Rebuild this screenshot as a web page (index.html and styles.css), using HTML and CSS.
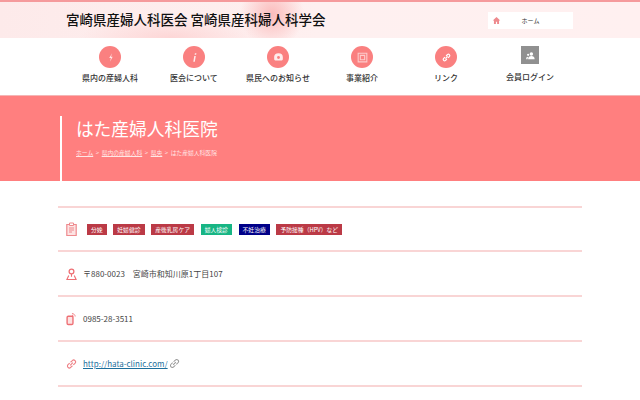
FILE: index.html
```html
<!DOCTYPE html>
<html lang="ja">
  <head>
    <meta charset="UTF-8" />
    <title>はた産婦人科医院</title>
    <link rel="stylesheet" href="styles.css">
  </head>
  <body>
    <header class="top">
      <div class="top-inner">
        <div class="site-name">宮崎県産婦人科医会 宮崎県産科婦人科学会</div>
        <a class="home-box" href="#">
          <svg class="home-icon" viewBox="0 0 12 12"><path d="M6 1.2 1 6h1.6v4.6h2.6V7.6h1.6v3h2.6V6H11z" fill="#ee8a8e"/></svg>
          <span class="home-label">ホーム</span>
        </a>
      </div>
    </header>

    <nav class="gnav">
      <a class="gnav-item" href="#">
        <span class="gnav-icon"><svg viewBox="0 0 12 12"><path d="M7.5 2 4.8 6.4h1.6L5.6 10 8 5.4H6.4z" fill="#fff" fill-opacity=".8"/></svg></span>
        <span>県内の産婦人科</span>
      </a>
      <a class="gnav-item" href="#">
        <span class="gnav-icon"><svg viewBox="0 0 12 12"><path d="M6.4 2h1.4l-.3 1.4H6.1zM5.8 4.6h1.4L6.3 10H4.9z" fill="#fff" fill-opacity=".85"/></svg></span>
        <span>医会について</span>
      </a>
      <a class="gnav-item" href="#">
        <span class="gnav-icon"><svg viewBox="0 0 12 12"><path d="M2 5.5a4 3.5 0 0 1 8 0v2.2a1 1 0 0 1-1 1H3a1 1 0 0 1-1-1z" fill="#fff" fill-opacity=".85"/><circle cx="6" cy="6" r="1.3" fill="#fa8080"/></svg></span>
        <span>県民へのお知らせ</span>
      </a>
      <a class="gnav-item" href="#">
        <span class="gnav-icon"><svg viewBox="0 0 12 12"><path d="M2 2h8v8H2zM4 4v4h4V4z" fill="none" stroke="#fff" stroke-opacity=".6"/></svg></span>
        <span>事業紹介</span>
      </a>
      <a class="gnav-item" href="#">
        <span class="gnav-icon"><svg viewBox="0 0 12 12"><path d="M5 7 7 5M4.6 5.6 3.2 7a1.3 1.3 0 0 0 1.8 1.8l1.4-1.4M7.4 6.4 8.8 5A1.3 1.3 0 0 0 7 3.2L5.6 4.6" fill="none" stroke="#fff" stroke-width="1.1"/></svg></span>
        <span>リンク</span>
      </a>
      <a class="gnav-item" href="#">
        <span class="gnav-icon gnav-icon-login"><svg viewBox="0 0 12 12"><circle cx="6.8" cy="4.6" r="1.6" fill="#fff"/><path d="M3.8 9.4c0-2 1.2-3 3-3s3 1 3 3z" fill="#fff"/><circle cx="3.8" cy="5.4" r="1" fill="#fff"/><path d="M2 9.4c0-1.4.6-2.2 1.8-2.2l-.6 2.2z" fill="#fff"/></svg></span>
        <span>会員ログイン</span>
      </a>
    </nav>

    <section class="hero">
      <div class="hero-inner">
        <h1>はた産婦人科医院</h1>
        <p class="crumbs"><a href="#">ホーム</a> &nbsp;&gt;&nbsp; <a href="#">県内の産婦人科</a> &nbsp;&gt;&nbsp; <a href="#">県央</a> &nbsp;&gt;&nbsp; はた産婦人科医院</p>
      </div>
    </section>

    <main class="detail">
      <div class="row row-tags">
        <svg class="row-icon" viewBox="0 0 11 14"><path d="M.8 2.5h9.4v11H.8z" fill="#fde3e3" stroke="#ee8a8e" stroke-width="1.2"/><path d="M3.5 1h4v2.5h-4z" fill="#fff" stroke="#ee8a8e"/><path d="M3 6h5M3 8h5M3 10h3" fill="none" stroke="#ee8a8e"/></svg>
        <ul class="tags">
          <li class="tag">分娩</li>
          <li class="tag">妊婦健診</li>
          <li class="tag">産後乳房ケア</li>
          <li class="tag tag-green">婦人検診</li>
          <li class="tag tag-navy">不妊治療</li>
          <li class="tag">予防接種（HPV）など</li>
        </ul>
      </div>
      <div class="row">
        <svg class="row-icon" viewBox="0 0 12 14"><circle cx="6" cy="4.2" r="2.6" fill="none" stroke="#ee6f74" stroke-width="1.4"/><path d="M6 7v3M3 8.6 1 13h10L9 8.6" fill="none" stroke="#ee6f74" stroke-width="1.2"/></svg>
        <span>〒880-0023　宮崎市和知川原1丁目107</span>
      </div>
      <div class="row">
        <svg class="row-icon" viewBox="0 0 12 14"><rect x="1.2" y="4" width="6.4" height="9" rx="1.3" fill="#fde3e3" stroke="#ee6f74" stroke-width="1.5"/><path d="M6.5 1c2 .2 3.2 1.2 3.6 3.2M6.5 2.8c.9.1 1.5.6 1.8 1.4" fill="none" stroke="#ee6f74" stroke-width=".9"/></svg>
        <span>0985-28-3511</span>
      </div>
      <div class="row">
        <svg class="row-icon" viewBox="0 0 12 14"><path d="M4.5 8.5l3-3M4 6 2.2 7.8a2 2 0 0 0 2.9 2.9L7 8.9M8 8l1.8-1.8a2 2 0 0 0-2.9-2.9L5 5.1" fill="none" stroke="#ee7f84" stroke-width="1.2"/></svg>
        <a class="site-link" href="#">http://hata-clinic.com/</a>
        <svg class="ext-icon" viewBox="0 0 12 12"><path d="M4.5 7.5l3-3M4 5 2.2 6.8a2 2 0 0 0 2.9 2.9L7 7.9M8 7l1.8-1.8a2 2 0 0 0-2.9-2.9L5 4.1" fill="none" stroke="#999" stroke-width="1.1"/></svg>
      </div>
    </main>
  </body>
</html>
```

FILE: styles.css
```css
* {
  box-sizing: border-box;
}

body {
  margin: 0;
  font-family: "Noto Sans CJK JP", "Noto Sans", sans-serif;
  color: #333;
  background-color: #fff;
}

a {
  color: inherit;
  text-decoration: none;
}

.top {
  height: 38px;
  border-top: 2px solid #f59a9c;
  background:
    radial-gradient(ellipse 32px 34px at 272px 12px, #fbbcbc, transparent),
    radial-gradient(ellipse 90px 22px at 170px 36px, #fdd6d6, transparent),
    linear-gradient(90deg, #fdeaea, #fef0f0 50%, #fff0f0);
}

.top-inner {
  width: 507px;
  height: 36px;
  margin-left: 66px;
  display: flex;
  align-items: center;
  justify-content: space-between;
}

.site-name {
  margin-bottom: 2px;
  font-size: 13.5px;
  font-weight: 500;
  color: #111;
  white-space: nowrap;
}

.home-box {
  width: 85px;
  height: 17px;
  padding-left: 4px;
  margin-top: 1px;
  background-color: #fff;
  display: flex;
  align-items: center;
}

.home-icon {
  width: 9px;
  height: 9px;
}

.home-label {
  flex: 1;
  padding-right: 13px;
  font-size: 6px;
  text-align: center;
}

.gnav {
  height: 58px;
  padding-left: 68px;
  display: grid;
  grid-template-columns: repeat(6, 84px);
  border-bottom: 1px solid #f5b5b5;
}

.gnav-item {
  padding-top: 8px;
  display: flex;
  flex-direction: column;
  align-items: center;
  gap: 4px;
  font-size: 8px;
  font-weight: 500;
  line-height: 12px;
  color: #333;
}

.gnav-icon {
  width: 22px;
  height: 22px;
  border-radius: 50%;
  background-color: #fa8080;
  display: flex;
  align-items: center;
  justify-content: center;
}

.gnav-icon svg {
  width: 13px;
  height: 13px;
}

.gnav-icon-login {
  width: 18px;
  height: 18px;
  margin: 0 0 3px;
  border-radius: 0;
  background-color: #909090;
}

.hero {
  height: 85px;
  padding: 20px 0 0 60px;
  background-color: #ff7f7f;
}

.hero-inner {
  height: 65px;
  padding: 0 0 0 14px;
  border-left: 2px solid #fff;
  color: #fff;
}

.hero h1 {
  margin: 0;
  font-size: 17.8px;
  font-weight: 400;
  line-height: 25px;
}

.crumbs {
  margin: 7px 0 0;
  font-size: 5.8px;
  line-height: 10px;
  color: #ffe6e6;
}

.crumbs a {
  text-decoration: underline;
}

.detail {
  width: 524px;
  margin: 25px 0 0 58px;
  border-top: 2px solid #f9d5d5;
}

.row {
  height: 45px;
  padding-left: 8px;
  display: flex;
  align-items: center;
  gap: 6px;
  border-bottom: 2px solid #f9d5d5;
  font-size: 8px;
  color: #444;
}

.row-icon {
  width: 11px;
  height: 14px;
  flex: none;
}

.row-tags {
  height: 44px;
}

.tags {
  margin: 0 0 0 4px;
  padding: 0;
  list-style: none;
  display: flex;
  gap: 6.7px;
}

.tag {
  height: 11px;
  padding: 0 4px;
  font-size: 5.8px;
  line-height: 11px;
  color: #fff;
  background-color: #bb3a46;
}

.tag-green {
  background-color: #17b584;
}

.tag-navy {
  background-color: #000088;
}

.site-link {
  color: #1d6f9c;
  text-decoration: underline;
}

.ext-icon {
  width: 11px;
  height: 11px;
  margin-left: -5px;
}
```
